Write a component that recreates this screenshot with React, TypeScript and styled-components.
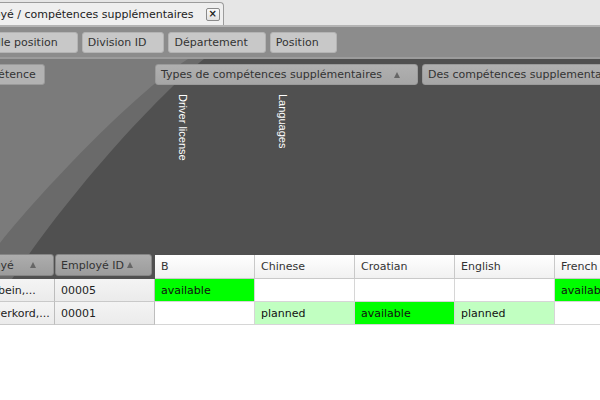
import React from "react";
import styled, { createGlobalStyle } from "styled-components";

const GlobalStyle = createGlobalStyle`
  html, body { margin: 0; padding: 0; background: #ffffff; }
  body { font-family: "DejaVu Sans", Verdana, sans-serif; font-size: 11px; color: #222; }
  * { box-sizing: border-box; }
`;

const OFFSET = 55;
const LANGS = ["Chinese", "Croatian", "English", "French", "German", "Italian"];
const DATA_COLS = ["B", ...LANGS];
const COLS = `110px 100px repeat(${DATA_COLS.length}, 100px)`;

const Viewport = styled.div`
  width: 600px;
  height: 400px;
  overflow: hidden;
  background: #fff;
`;

const Canvas = styled.div`
  margin-left: -${OFFSET}px;
  width: max-content;
  min-width: ${600 + OFFSET}px;
`;

const TabStrip = styled.div`
  height: 27px;
  background: #e6e6e6;
  border-bottom: 2px solid #b4b4b4;
  display: flex;
  align-items: flex-end;
  padding-left: 12px;
`;

const Tab = styled.div`
  height: 23px;
  display: flex;
  align-items: center;
  gap: 12px;
  padding: 0 3px 0 8px;
  background: #efefef;
  border: 1px solid #9c9c9c;
  border-bottom: none;
  border-radius: 0 4px 0 0;
  color: #222;
`;

const TabLabel = styled.span`
  white-space: nowrap;
`;

const CloseBox = styled.span`
  width: 14px;
  height: 13px;
  border: 1px solid #8a8a8a;
  border-radius: 2px;
  background: linear-gradient(#fafafa, #e2e2e2);
  display: flex;
  align-items: center;
  justify-content: center;
  font-family: "DejaVu Sans", sans-serif;
  font-weight: bold;
  font-size: 10px;
  line-height: 1;
  color: #222;
`;

const FilterBar = styled.div`
  display: flex;
  gap: 4px;
  padding: 5px 4px 4px 20px;
  background: #8c8c8c;
  border-bottom: 2px solid #9c9c9c;
`;

const FieldButton = styled.div<{ $tone: "filter" | "column" | "data" | "row"; $pr?: number }>`
  height: 21px;
  display: flex;
  align-items: center;
  padding: 0 ${(p) => p.$pr ?? 17}px 0 5px;
  border-radius: 3px;
  white-space: nowrap;
  color: #333;
  background: ${(p) =>
    p.$tone === "filter"
      ? "#c8c8c8"
      : p.$tone === "data"
      ? "#b2b2b2"
      : p.$tone === "column"
      ? "linear-gradient(#b0b0b0, #a6a6a6)"
      : "linear-gradient(#adadad, #9c9c9c)"};
  border: 1px solid
    ${(p) => (p.$tone === "filter" ? "#b4b4b4" : p.$tone === "row" ? "#858585" : "#9a9a9a")};
`;

const SortUp = styled.span<{ $ml?: number }>`
  display: inline-block;
  margin-left: ${(p) => p.$ml ?? 12}px;
  width: 0;
  height: 0;
  border-left: 3.5px solid transparent;
  border-right: 3.5px solid transparent;
  border-bottom: 6px solid #666666;
`;

const PivotHeader = styled.div`
  position: relative;
  background: #505050;
`;

const Swoosh = styled.svg`
  position: absolute;
  left: ${OFFSET}px;
  top: 0;
  width: 600px;
  height: 100%;
`;

const Grid = styled.div`
  position: relative;
  display: grid;
  grid-template-columns: ${COLS};
`;

const FieldZone = styled.div<{ $span: number; $pl?: number }>`
  grid-column: span ${(p) => p.$span};
  height: 29px;
  display: flex;
  align-items: flex-start;
  gap: 4px;
  padding: 5px 0 0 ${(p) => p.$pl ?? 0}px;
  overflow: hidden;
`;

const VHeaderZone = styled.div<{ $span: number }>`
  grid-column: span ${(p) => p.$span};
  height: 167px;
  padding: 6px 0 0 21px;
`;

const VLabel = styled.div`
  writing-mode: vertical-rl;
  font-family: "Liberation Sans", Arial, sans-serif;
  font-size: 11px;
  line-height: 13px;
  color: #ffffff;
  white-space: nowrap;
`;

const RowFieldCell = styled.div<{ $pl: number; $pr: number }>`
  height: 24px;
  padding: 0 ${(p) => p.$pr}px 0 ${(p) => p.$pl}px;
  display: flex;
  align-items: flex-start;
  & > * { flex: 1; height: 22px; margin-top: -1px; }
`;

const ColHeader = styled.div`
  height: 24px;
  display: flex;
  align-items: center;
  padding-left: 6px;
  background: linear-gradient(#ffffff, #f1f1f1);
  border-right: 1px solid #c9c9c9;
  border-bottom: 1px solid #c9c9c9;
  color: #333;
  white-space: nowrap;
`;

const RowHeader = styled.div`
  height: 23px;
  display: flex;
  align-items: center;
  padding-left: 6px;
  background: linear-gradient(#f4f4f4, #ebebeb);
  border-right: 1px solid #bdbdbd;
  border-bottom: 1px solid #c9c9c9;
  color: #222;
  white-space: nowrap;
  overflow: hidden;
`;

const Cell = styled.div<{ $state?: "available" | "planned" }>`
  height: 23px;
  display: flex;
  align-items: center;
  padding-left: 6px;
  background: ${(p) =>
    p.$state === "available" ? "#00ff00" : p.$state === "planned" ? "#c1ffc1" : "#ffffff"};
  border-right: 1px solid #d6d6d6;
  border-bottom: 1px solid #d6d6d6;
  color: #111;
  white-space: nowrap;
`;

type State = "available" | "planned" | undefined;

const rows: { name: string; id: string; values: State[] }[] = [
  {
    name: "Muehlenbein,...",
    id: "00005",
    values: ["available", undefined, undefined, undefined, "available", undefined, undefined],
  },
  {
    name: "Sterrenwerkord,...",
    id: "00001",
    values: [undefined, "planned", "available", "planned", undefined, undefined, undefined],
  },
];

export default function App() {
  return (
    <>
      <GlobalStyle />
      <Viewport>
        <Canvas>
          <TabStrip>
            <Tab>
              <TabLabel>Employé / compétences supplémentaires</TabLabel>
              <CloseBox>×</CloseBox>
            </Tab>
          </TabStrip>

          <FilterBar>
            <FieldButton $tone="filter" $pr={19}>Échelle position</FieldButton>
            <FieldButton $tone="filter">Division ID</FieldButton>
            <FieldButton $tone="filter">Département</FieldButton>
            <FieldButton $tone="filter">Position</FieldButton>
          </FilterBar>

          <PivotHeader>
            <Swoosh viewBox="0 0 600 220" preserveAspectRatio="none">
              <path d="M0 0 L204 0 C 160 34, 72 130, 12 220 L0 220 Z" fill="#6a6a6a" />
              <path d="M0 0 L188 0 C 140 30, 50 122, 0 184 Z" fill="#7b7b7b" />
            </Swoosh>
            <Grid>
              <FieldZone $span={2} $pl={15}>
                <FieldButton $tone="data" $pr={8}>Compétence</FieldButton>
              </FieldZone>
              <FieldZone $span={DATA_COLS.length}>
                <FieldButton $tone="column">
                  Types de compétences supplémentaires
                  <SortUp />
                </FieldButton>
                <FieldButton $tone="column">Des compétences supplementaires</FieldButton>
              </FieldZone>

              <VHeaderZone $span={2} />
              <VHeaderZone $span={1}>
                <VLabel>Driver license</VLabel>
              </VHeaderZone>
              <VHeaderZone $span={LANGS.length}>
                <VLabel>Languages</VLabel>
              </VHeaderZone>

              <RowFieldCell $pl={15} $pr={4}>
                <FieldButton $tone="row">
                  Employé
                  <SortUp $ml={16} />
                </FieldButton>
              </RowFieldCell>
              <RowFieldCell $pl={0} $pr={3}>
                <FieldButton $tone="row">
                  Employé ID
                  <SortUp $ml={3} />
                </FieldButton>
              </RowFieldCell>
              {DATA_COLS.map((c) => (
                <ColHeader key={c}>{c}</ColHeader>
              ))}
            </Grid>
          </PivotHeader>

          <Grid>
            {rows.map((r) => (
              <React.Fragment key={r.id}>
                <RowHeader>{r.name}</RowHeader>
                <RowHeader>{r.id}</RowHeader>
                {r.values.map((v, i) => (
                  <Cell key={i} $state={v}>
                    {v ?? ""}
                  </Cell>
                ))}
              </React.Fragment>
            ))}
          </Grid>
        </Canvas>
      </Viewport>
    </>
  );
}
